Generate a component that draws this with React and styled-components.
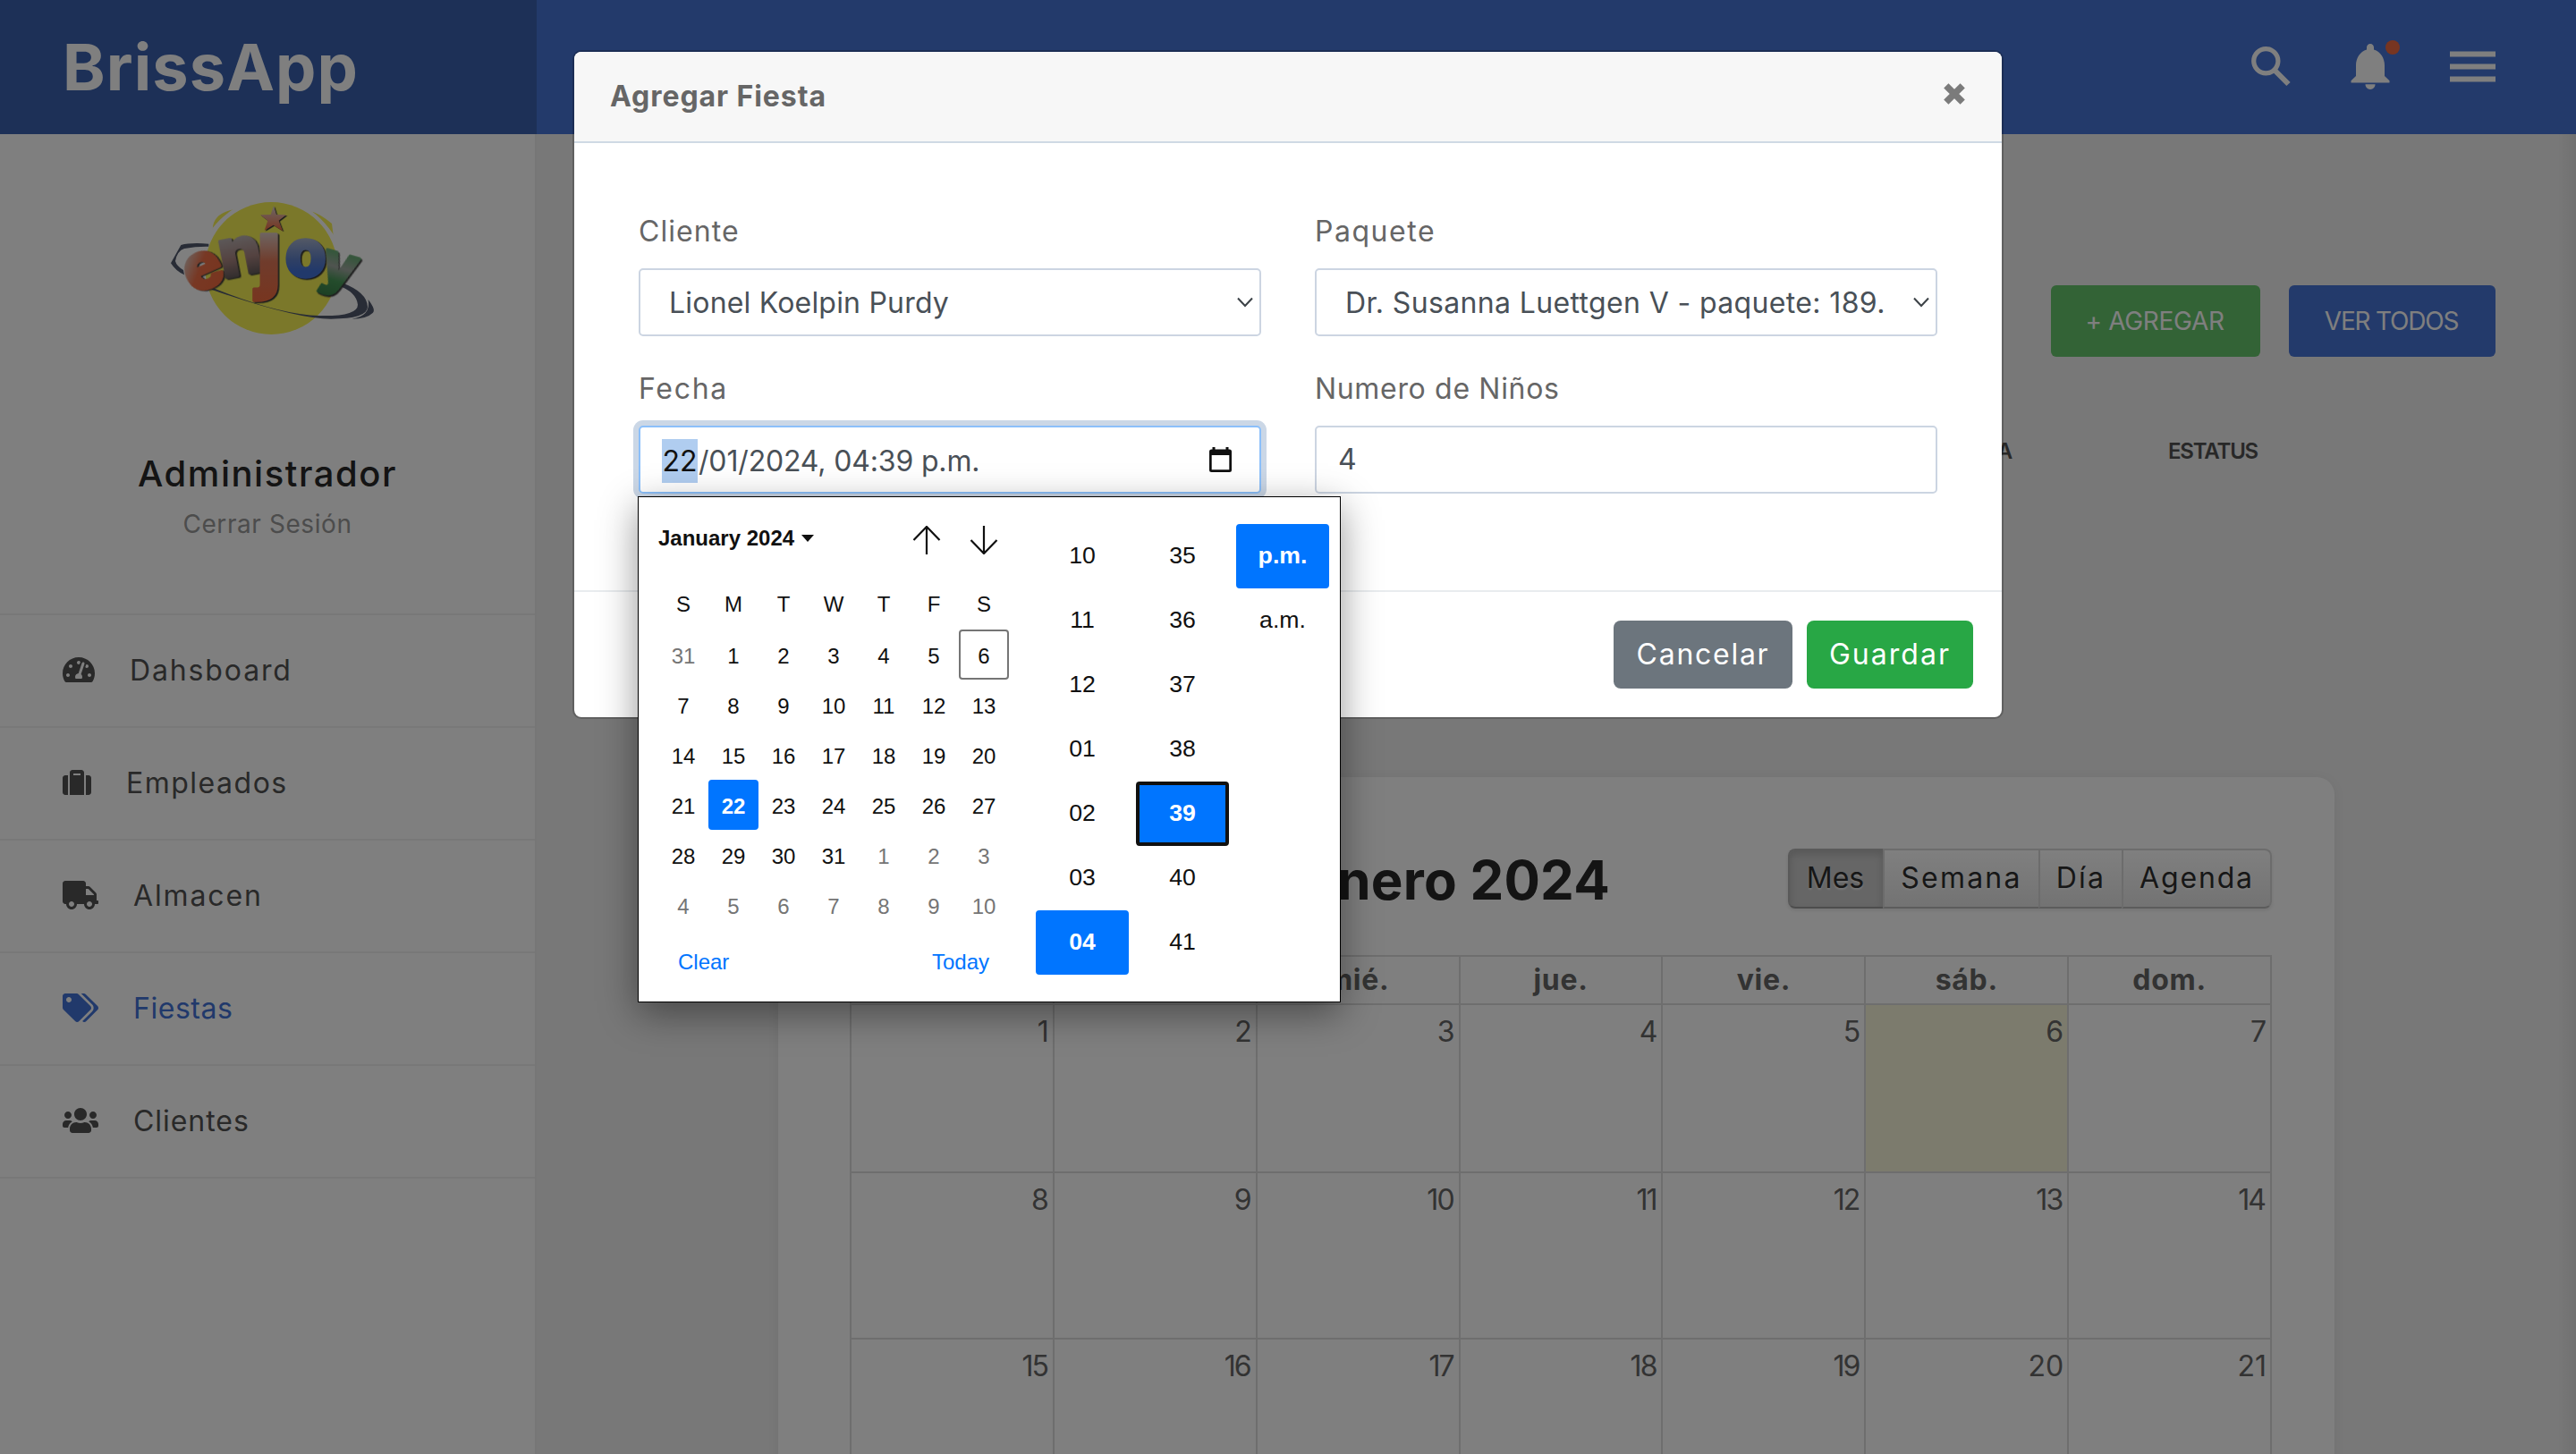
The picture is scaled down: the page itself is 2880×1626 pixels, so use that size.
import React from "react";
import styled, { createGlobalStyle, css } from "styled-components";
import { FaTachometerAlt, FaSuitcase, FaTruck, FaTags, FaUsers } from "react-icons/fa";

const GlobalStyle = createGlobalStyle`
  *, *::before, *::after { box-sizing: border-box; }
  html, body { margin: 0; padding: 0; }
  body { font-family: Inter, "Open Sans", sans-serif; font-size: 32px; color: #666; overflow: hidden; }
  h1, h2, p { margin: 0; }
  svg { display: block; flex: none; }
`;

const Screen = styled.div`
  position: relative;
  width: 2880px;
  height: 1626px;
  overflow: hidden;
  background: #fff;
`;

const Shell = styled.div`
  display: grid;
  grid-template-columns: 600px 1fr;
  grid-template-rows: 150px 1476px;
`;

/* ---------- header ---------- */

const Brand = styled.div`
  display: flex;
  align-items: center;
  padding: 0 0 2px 70px;
  background: #3a60ae;
  color: #fff;
  font-size: 72px;
  font-weight: 700;
  letter-spacing: 1.1px;
`;

const TopBar = styled.header`
  display: flex;
  align-items: center;
  justify-content: flex-end;
  padding-right: 90px;
  background: #4674d6;
  color: #fff;
`;

const BellSlot = styled.div`
  margin: 0 55px 0 67px;
`;

/* ---------- sidebar ---------- */

const Sidebar = styled.aside`
  background: #fff;
  border-right: 2px solid #ececec;
`;

const Profile = styled.div`
  display: flex;
  flex-direction: column;
  align-items: center;
  height: 536px;
  padding-top: 60px;
`;

const LogoBox = styled.div`
  margin-left: 12px;
`;

const ProfileName = styled.p`
  margin-top: 110px;
  line-height: 60px;
  font-size: 40px;
  font-weight: 500;
  letter-spacing: 1.54px;
  color: #282828;
`;

const LogoutLink = styled.a`
  margin-top: 6px;
  line-height: 40px;
  font-size: 28px;
  letter-spacing: 0.58px;
  color: #999;
`;

const Menu = styled.nav`
  border-bottom: 2px solid #f0f0f0;
`;

const MenuItem = styled.a`
  display: flex;
  align-items: center;
  gap: 39px;
  height: 126px;
  padding: 0 0 2px 70px;
  border-top: 2px solid #f0f0f0;
  color: ${(p) => (p.$active ? "#4272d7" : "#525252")};
  letter-spacing: ${(p) => p.$track}px;
`;

const MenuIcon = styled.span`
  svg { width: ${(p) => p.$width}px; height: 32px; }
`;

/* ---------- content ---------- */

const Content = styled.main`
  background: linear-gradient(to left, rgba(0, 0, 0, 0.06), transparent 20px) #f0f0f0;
`;

const Actions = styled.div`
  display: flex;
  justify-content: flex-end;
  gap: 32px;
  padding: 169px 90px 0 0;
`;

const ActionButton = styled.button`
  width: ${(p) => p.$width}px;
  height: 80px;
  padding: 0 2px 1px 0;
  border: 0;
  border-radius: 6px;
  background: ${(p) => p.$bg};
  color: #fff;
  font: 400 28px Inter, sans-serif;
  letter-spacing: ${(p) => p.$track}px;
`;

const ListHead = styled.div`
  display: flex;
  justify-content: flex-end;
  gap: 175px;
  margin-top: 84px;
  padding-right: 356px;
  line-height: 44px;
  font-size: 24px;
  font-weight: 600;
  letter-spacing: -1.2px;
  color: #505050;
`;

const CalendarCard = styled.section`
  width: 1740px;
  height: 900px;
  margin: 342px 0 0 270px;
  padding: 80px 70px 0 80px;
  border-radius: 20px;
  background: #fff;
  box-shadow: 0 2px 14px rgba(0, 0, 0, 0.06);
`;

const CalendarToolbar = styled.div`
  display: flex;
  align-items: center;
  justify-content: flex-end;
  height: 67px;
  margin-bottom: 52px;
`;

const MonthTitle = styled.h2`
  margin-right: 199px;
  padding-top: 4px;
  font-size: 60px;
  font-weight: 700;
  letter-spacing: 0.23px;
  line-height: 67px;
  color: #282828;
`;

const ViewSwitch = styled.div`
  display: flex;
  height: 67px;
  border-radius: 8px;
  box-shadow: 0 2px 4px rgba(0, 0, 0, 0.1);
`;

const ViewButton = styled.button`
  width: ${(p) => p.$width}px;
  padding: 0 0 2px;
  border: 2px solid #d8d8d8;
  border-bottom-color: #b8b8b8;
  border-right-width: 0;
  background: linear-gradient(#fff, #e6e6e6);
  color: #2e2e2e;
  font: 400 32px Inter, sans-serif;
  letter-spacing: ${(p) => p.$track}px;
  text-shadow: 0 2px 2px rgba(255, 255, 255, 0.75);
  &:first-child { border-radius: 8px 0 0 8px; }
  &:last-child { border-radius: 0 8px 8px 0; border-right-width: 2px; }
  ${(p) =>
    p.$active &&
    css`
      padding-right: 2px;
      background: #ccc;
      border-color: #b4b4b4 #b4b4b4 #9a9a9a;
      box-shadow: inset 0 4px 8px rgba(0, 0, 0, 0.15);
    `}
`;

const MonthGrid = styled.div`
  display: grid;
  grid-template-columns: repeat(7, 1fr);
  grid-template-rows: 54px 188px 186px 186px;
  border-top: 2px solid #ddd;
  border-left: 2px solid #ddd;
`;

const WeekdayCell = styled.div`
  display: flex;
  align-items: center;
  justify-content: center;
  padding-bottom: 1px;
  border-right: 2px solid #ddd;
  border-bottom: 2px solid #ddd;
  font-weight: 700;
  letter-spacing: 0.7px;
`;

const MonthCell = styled.div`
  padding: 10px ${(p) => (p.$narrow ? 6 : 4)}px 0 0;
  border-right: 2px solid #ddd;
  border-bottom: 2px solid #ddd;
  background: ${(p) => (p.$today ? "#f8f6da" : "transparent")};
  line-height: 40px;
  letter-spacing: ${(p) => (p.$narrow ? -2 : 0)}px;
  text-align: right;
`;

/* ---------- modal ---------- */

const Backdrop = styled.div`
  position: absolute;
  inset: 0;
  display: flex;
  align-items: flex-start;
  justify-content: center;
  padding-top: 56px;
  background: rgba(0, 0, 0, 0.5);
`;

const Modal = styled.div`
  width: 1600px;
  border: 2px solid rgba(0, 0, 0, 0.2);
  border-radius: 10px;
  background: #fff;
  background-clip: padding-box;
`;

const ModalHeader = styled.div`
  display: flex;
  align-items: center;
  justify-content: space-between;
  height: 102px;
  padding: 0 41px 0 40px;
  border-bottom: 2px solid #cfd9e4;
  border-radius: 8px 8px 0 0;
  background: #f7f7f7;
`;

const ModalTitle = styled.h1`
  padding-bottom: 1px;
  font-size: 32px;
  font-weight: 700;
  letter-spacing: 0.93px;
  color: #666;
`;

const CloseButton = styled.button`
  padding: 0 0 6px;
  border: 0;
  background: none;
`;

const ModalBody = styled.div`
  display: grid;
  grid-template-columns: 696px 696px;
  column-gap: 60px;
  row-gap: 33px;
  align-content: start;
  height: 500px;
  padding: 73px 72px 0;
`;

const Field = styled.div``;

const Label = styled.label`
  display: block;
  margin-bottom: 17px;
  padding-top: 2px;
  line-height: 48px;
  letter-spacing: ${(p) => p.$track}px;
  color: #666;
`;

const Control = styled.div`
  display: flex;
  align-items: center;
  height: 76px;
  padding: 0 7px 0 ${(p) => p.$indent || 24}px;
  border: 2px solid #ccd5e2;
  border-radius: 5px;
  background: #fff;
  color: #495057;
  ${(p) =>
    p.$focus &&
    css`
      padding-right: 31px;
      border-color: #8cc0fa;
      box-shadow: 0 0 0 6px #cbd7e6;
    `}
`;

const ControlText = styled.span`
  flex: 1;
  overflow: hidden;
  margin-right: ${(p) => p.$gap || 0}px;
  padding-top: ${(p) => p.$drop || 0}px;
  line-height: 56px;
  white-space: nowrap;
  letter-spacing: ${(p) => p.$track || 0}px;
`;

const DaySegment = styled.span`
  width: 40px;
  margin-top: 3px;
  background: #b0cdf0;
  color: #111;
  line-height: 49px;
  text-align: center;
`;

const DateRest = styled.span`
  flex: 1;
  margin-top: 3px;
  padding-left: 1px;
  letter-spacing: -0.16px;
`;

const ModalFooter = styled.div`
  display: flex;
  justify-content: flex-end;
  gap: 16px;
  padding: 32px;
  border-top: 2px solid #e9ecef;
`;

const FooterButton = styled.button`
  width: ${(p) => p.$width}px;
  height: 76px;
  padding: 0 0 1px;
  border: 0;
  border-radius: 8px;
  background: ${(p) => p.$bg};
  color: #fff;
  font: 400 32px Inter, sans-serif;
  letter-spacing: ${(p) => p.$track}px;
`;

/* ---------- date-time picker ---------- */

const Picker = styled.div`
  position: absolute;
  top: 555px;
  left: 713px;
  display: flex;
  width: 786px;
  height: 566px;
  padding: 30px 0 0 22px;
  border: 1px solid #000;
  background: #fff;
  box-shadow: 0 12px 40px rgba(0, 0, 0, 0.42);
  color: #101010;
  font-family: "Liberation Sans", Arial, sans-serif;
`;

const DatePane = styled.div`
  width: 392px;
  margin-right: 30px;
  font-size: 24px;
`;

const PickerHeader = styled.div`
  display: flex;
  align-items: center;
  height: 36px;
  padding-right: 12px;
`;

const PickerMonth = styled.div`
  display: flex;
  flex: 1;
  align-items: center;
  gap: 8px;
  margin-top: -4px;
  font-weight: 700;
`;

const ArrowPair = styled.div`
  display: flex;
  gap: 32px;
`;

const WeekRow = styled.div`
  display: grid;
  grid-template-columns: repeat(7, 56px);
  margin-top: 40px;
  line-height: 28px;
  text-align: center;
`;

const DayGrid = styled.div`
  display: grid;
  grid-template-columns: repeat(7, 56px);
  grid-auto-rows: 56px;
  margin-top: 14px;
`;

const Day = styled.div`
  display: flex;
  align-items: center;
  justify-content: center;
  padding-top: 3px;
  border: 2px solid transparent;
  border-radius: 4px;
  color: ${(p) => (p.$muted ? "#757575" : "#101010")};
  ${(p) => p.$today && css`border-color: #757575;`}
  ${(p) =>
    p.$selected &&
    css`
      border-color: #0075ff;
      background: #0075ff;
      color: #fff;
      font-weight: 700;
    `}
`;

const PickerFooter = styled.div`
  display: flex;
  justify-content: space-between;
  margin-top: 22px;
  padding: 0 22px 0 22px;
  line-height: 28px;
  color: #0075ff;
`;

const TimePane = styled.div`
  display: flex;
  gap: 8px;
`;

const TimeColumn = styled.div`
  width: 104px;
`;

const TimeCell = styled.div`
  display: flex;
  align-items: center;
  justify-content: center;
  height: 72px;
  padding-bottom: 2px;
  border: 4px solid transparent;
  border-radius: 4px;
  font-size: 26.67px;
  ${(p) =>
    p.$selected &&
    css`
      border-color: ${p.$focus ? "#101010" : "#0075ff"};
      background: #0075ff;
      color: #fff;
      font-weight: 700;
    `}
`;

/* ---------- drawings ---------- */

const SearchIcon = () => (
  <svg width="44" height="60" viewBox="0 0 44 60" fill="none" stroke="#fff">
    <circle cx="16.3" cy="23.3" r="13.6" strokeWidth="5.2" />
    <path d="M27 34.5 L41.5 49" strokeWidth="6" />
  </svg>
);

const BellIcon = () => (
  <svg width="56" height="60" viewBox="0 0 56 60">
    <path
      fill="#fff"
      d="M22 4c2.4 0 4 1.8 4 4v2.6C33.5 13 38 20 38 28v12l5.5 5.2V47.5H.5v-2.3L6 40V28c0-8 4.500-15 12-17.400V8c0-2.200 1.600-4 4-4z"
    />
    <path fill="#fff" d="M16.500 49.300h11c0 3.300-2.500 5.700-5.500 5.700s-5.500-2.400-5.500-5.700z" />
    <circle cx="47" cy="8" r="8" fill="#ef6a42" />
  </svg>
);

const BarsIcon = () => (
  <svg width="51" height="60" viewBox="0 0 51 60" fill="#fff">
    <rect y="12.500" width="51" height="6" />
    <rect y="26.500" width="51" height="6" />
    <rect y="40.500" width="51" height="6" />
  </svg>
);

const CloseIcon = () => (
  <svg width="24" height="24" viewBox="0 0 24 24" stroke="#7b7b7b" strokeWidth="7.4">
    <path d="M2.800 2.800 L21.200 21.200 M21.200 2.800 L2.800 21.200" />
  </svg>
);

const Chevron = () => (
  <svg width="18" height="12" viewBox="0 0 18 12" fill="none" stroke="#3c4247" strokeWidth="2">
    <path d="M1 1.500 L9 10 L17 1.500" />
  </svg>
);

const DateIcon = () => (
  <svg width="25" height="28" viewBox="0 0 25 28">
    <path
      fill="#101010"
      fillRule="evenodd"
      d="M3.500 0h3v2.500h12V0h3v2.500h1A2.500 2.500 0 0 1 25 5v20.500a2.500 2.500 0 0 1-2.500 2.500h-20A2.500 2.500 0 0 1 0 25.500V5a2.500 2.500 0 0 1 2.500-2.500h1zM2.700 9v16.300h19.600V9z"
    />
  </svg>
);

const Caret = () => (
  <svg width="14" height="8" viewBox="0 0 14 8" fill="#101010">
    <path d="M0 0h14L7 8z" />
  </svg>
);

const ArrowIcon = ({ down }) => (
  <svg width="32" height="32" viewBox="0 0 32 32" fill="none" stroke="#101010" strokeWidth="2.2">
    {down ? <path d="M16 0V31M1.500 16L16 31L30.500 16" /> : <path d="M16 32V1M1.500 16L16 1L30.500 16" />}
  </svg>
);

const Glyph = styled.text`
  font-family: Inter, sans-serif;
  font-weight: 800;
  text-anchor: middle;
  stroke-width: 10px;
  stroke-linejoin: round;
  filter: drop-shadow(5px 4px 1px #3a3a3a);
`;

const Star = styled.path`
  filter: drop-shadow(4px 3px 1px #3a3a3a);
`;

const EnjoyLogo = () => (
  <svg width="270" height="180" viewBox="0 0 810 540">
    <defs>
      <linearGradient id="gE" x1="0" y1="0" x2="0.5" y2="1">
        <stop offset="0.3" stopColor="#d8d0cc" />
        <stop offset="0.6" stopColor="#f07048" />
        <stop offset="1" stopColor="#f06a3e" />
      </linearGradient>
      <linearGradient id="gN" x1="0" y1="0" x2="0" y2="1">
        <stop offset="0.35" stopColor="#b8aeae" />
        <stop offset="0.6" stopColor="#a88480" />
        <stop offset="0.85" stopColor="#5c5656" />
      </linearGradient>
      <linearGradient id="gJ" x1="0" y1="0" x2="0" y2="1">
        <stop offset="0.3" stopColor="#dcd4d0" />
        <stop offset="0.6" stopColor="#e07858" />
        <stop offset="1" stopColor="#f06a3e" />
      </linearGradient>
      <linearGradient id="gO" x1="0" y1="0" x2="0" y2="1">
        <stop offset="0.35" stopColor="#a4b0cc" />
        <stop offset="0.6" stopColor="#5f80c8" />
        <stop offset="0.75" stopColor="#4272d7" />
      </linearGradient>
      <linearGradient id="gY" x1="0" y1="0" x2="0" y2="1">
        <stop offset="0.35" stopColor="#6cac78" />
        <stop offset="0.55" stopColor="#a0a8a0" />
        <stop offset="0.75" stopColor="#489858" />
        <stop offset="1" stopColor="#3a8048" />
      </linearGradient>
      <linearGradient id="gS" x1="0" y1="0" x2="0" y2="1">
        <stop offset="0" stopColor="#d8d0cc" />
        <stop offset="1" stopColor="#f06a3e" />
      </linearGradient>
    </defs>
    <path d="M190 188Q130 183 97 192L63 253Q80 280 108 292L105 276Q82 262 78 246Q84 212 108 204Q150 196 190 197Z" fill="#50586c" />
    <circle cx="400" cy="270" r="222" fill="#f6f054" />
    <path d="M203 140Q205 85 275 73L240 98Q220 115 203 140Z" fill="#f6f054" />
    <path d="M203 140Q228 105 275 73" fill="none" stroke="#fff" strokeWidth="6" />
    <path d="M530 78Q560 85 603 120L608 160Q575 110 530 78Z" fill="#f6f054" />
    <path d="M530 78Q575 110 608 162" fill="none" stroke="#fff" strokeWidth="6" />
    <path d="M190 330Q420 425 560 429Q690 432 690 392Q685 350 625 328L635 318Q722 350 723 400Q722 440 600 440Q480 440 190 338Z" fill="#50586c" />
    <path d="M725 375Q752 410 740 420Q720 440 670 440Q735 430 725 375Z" fill="#50586c" />
    <Star d="M408 60L417 90L450 91L425 110L438 145L407 125L377 143L388 110L363 91L398 90Z" fill="url(#gS)" />
    <Glyph transform="translate(196 332) rotate(-24)" fontSize="215" fill="url(#gE)" stroke="url(#gE)">e</Glyph>
    <Glyph transform="translate(308 290) rotate(-11)" fontSize="225" fill="url(#gN)" stroke="url(#gN)">n</Glyph>
    <Glyph transform="translate(392 318)" fontSize="295" fill="url(#gJ)" stroke="url(#gJ)">ȷ</Glyph>
    <Glyph transform="translate(515 296)" fontSize="225" fill="url(#gO)" stroke="url(#gO)">o</Glyph>
    <Glyph transform="translate(613 324) rotate(16)" fontSize="190" fill="url(#gY)" stroke="url(#gY)">y</Glyph>
  </svg>
);

/* ---------- data ---------- */

const menu = [
  { label: "Dahsboard", Icon: FaTachometerAlt, iconWidth: 36, track: 1.86 },
  { label: "Empleados", Icon: FaSuitcase, iconWidth: 32, track: 1.5 },
  { label: "Almacen", Icon: FaTruck, iconWidth: 40, track: 1.87 },
  { label: "Fiestas", Icon: FaTags, iconWidth: 40, track: 0.54, active: true },
  { label: "Clientes", Icon: FaUsers, iconWidth: 40, track: 0.96 },
];

const views = [
  { label: "Mes", width: 106, track: 0, active: true },
  { label: "Semana", width: 174, track: 2.2 },
  { label: "Día", width: 93, track: 2.2 },
  { label: "Agenda", width: 168, track: 1.83 },
];

const weekdays = ["lun.", "mar.", "mié.", "jue.", "vie.", "sáb.", "dom."];
const monthDays = Array.from({ length: 21 }, (_, i) => i + 1);
const pickerWeek = ["S", "M", "T", "W", "T", "F", "S"];
const pickerDays = Array.from({ length: 42 }, (_, i) => {
  if (i === 0) return { n: 31, muted: true };
  if (i > 31) return { n: i - 31, muted: true };
  return { n: i, today: i === 6, selected: i === 22 };
});
const hours = ["10", "11", "12", "01", "02", "03", "04"];
const minutes = ["35", "36", "37", "38", "39", "40", "41"];

export default function App() {
  return (
    <Screen>
      <GlobalStyle />
      <Shell>
        <Brand>BrissApp</Brand>
        <TopBar>
          <SearchIcon />
          <BellSlot>
            <BellIcon />
          </BellSlot>
          <BarsIcon />
        </TopBar>

        <Sidebar>
          <Profile>
            <LogoBox>
              <EnjoyLogo />
            </LogoBox>
            <ProfileName>Administrador</ProfileName>
            <LogoutLink>Cerrar Sesión</LogoutLink>
          </Profile>
          <Menu>
            {menu.map(({ label, Icon, iconWidth, track, active }) => (
              <MenuItem key={label} $track={track} $active={active}>
                <MenuIcon $width={iconWidth}>
                  <Icon />
                </MenuIcon>
                {label}
              </MenuItem>
            ))}
          </Menu>
        </Sidebar>

        <Content>
          <Actions>
            <ActionButton $width={234} $bg="#66c66c" $track={-0.32}>+ AGREGAR</ActionButton>
            <ActionButton $width={231} $bg="#4674d6" $track={-1.21}>VER TODOS</ActionButton>
          </Actions>
          <ListHead>
            <span>FECHA</span>
            <span>ESTATUS</span>
          </ListHead>
          <CalendarCard>
            <CalendarToolbar>
              <MonthTitle>Enero 2024</MonthTitle>
              <ViewSwitch>
                {views.map((v) => (
                  <ViewButton key={v.label} $width={v.width} $track={v.track} $active={v.active}>
                    {v.label}
                  </ViewButton>
                ))}
              </ViewSwitch>
            </CalendarToolbar>
            <MonthGrid>
              {weekdays.map((d) => (
                <WeekdayCell key={d}>{d}</WeekdayCell>
              ))}
              {monthDays.map((d) => (
                <MonthCell key={d} $today={d === 6} $narrow={d >= 10 && d < 20}>
                  {d}
                </MonthCell>
              ))}
            </MonthGrid>
          </CalendarCard>
        </Content>
      </Shell>

      <Backdrop>
        <Modal>
          <ModalHeader>
            <ModalTitle>Agregar Fiesta</ModalTitle>
            <CloseButton>
              <CloseIcon />
            </CloseButton>
          </ModalHeader>
          <ModalBody>
            <Field>
              <Label $track={1.07}>Cliente</Label>
              <Control $indent={32}>
                <ControlText $track={0.2} $drop={1}>Lionel Koelpin Purdy</ControlText>
                <Chevron />
              </Control>
            </Field>
            <Field>
              <Label $track={1.54}>Paquete</Label>
              <Control $indent={32}>
                <ControlText $track={0.36} $gap={33} $drop={1}>Dr. Susanna Luettgen V - paquete: 189.0</ControlText>
                <Chevron />
              </Control>
            </Field>
            <Field>
              <Label $track={1.7}>Fecha</Label>
              <Control $focus>
                <DaySegment>22</DaySegment>
                <DateRest>/01/2024, 04:39 p.m.</DateRest>
                <DateIcon />
              </Control>
            </Field>
            <Field>
              <Label $track={0.67}>Numero de Niños</Label>
              <Control>
                <ControlText>4</ControlText>
              </Control>
            </Field>
          </ModalBody>
          <ModalFooter>
            <FooterButton $width={200} $bg="#6c757d" $track={1.73}>Cancelar</FooterButton>
            <FooterButton $width={186} $bg="#28a745" $track={2.03}>Guardar</FooterButton>
          </ModalFooter>
        </Modal>
      </Backdrop>

      <Picker>
        <DatePane>
          <PickerHeader>
            <PickerMonth>
              January 2024
              <Caret />
            </PickerMonth>
            <ArrowPair>
              <ArrowIcon />
              <ArrowIcon down />
            </ArrowPair>
          </PickerHeader>
          <WeekRow>
            {pickerWeek.map((d, i) => (
              <span key={i}>{d}</span>
            ))}
          </WeekRow>
          <DayGrid>
            {pickerDays.map((d, i) => (
              <Day key={i} $muted={d.muted} $today={d.today} $selected={d.selected}>
                {d.n}
              </Day>
            ))}
          </DayGrid>
          <PickerFooter>
            <span>Clear</span>
            <span>Today</span>
          </PickerFooter>
        </DatePane>
        <TimePane>
          <TimeColumn>
            {hours.map((h) => (
              <TimeCell key={h} $selected={h === "04"}>{h}</TimeCell>
            ))}
          </TimeColumn>
          <TimeColumn>
            {minutes.map((m) => (
              <TimeCell key={m} $selected={m === "39"} $focus>{m}</TimeCell>
            ))}
          </TimeColumn>
          <TimeColumn>
            <TimeCell $selected>p.m.</TimeCell>
            <TimeCell>a.m.</TimeCell>
          </TimeColumn>
        </TimePane>
      </Picker>
    </Screen>
  );
}
